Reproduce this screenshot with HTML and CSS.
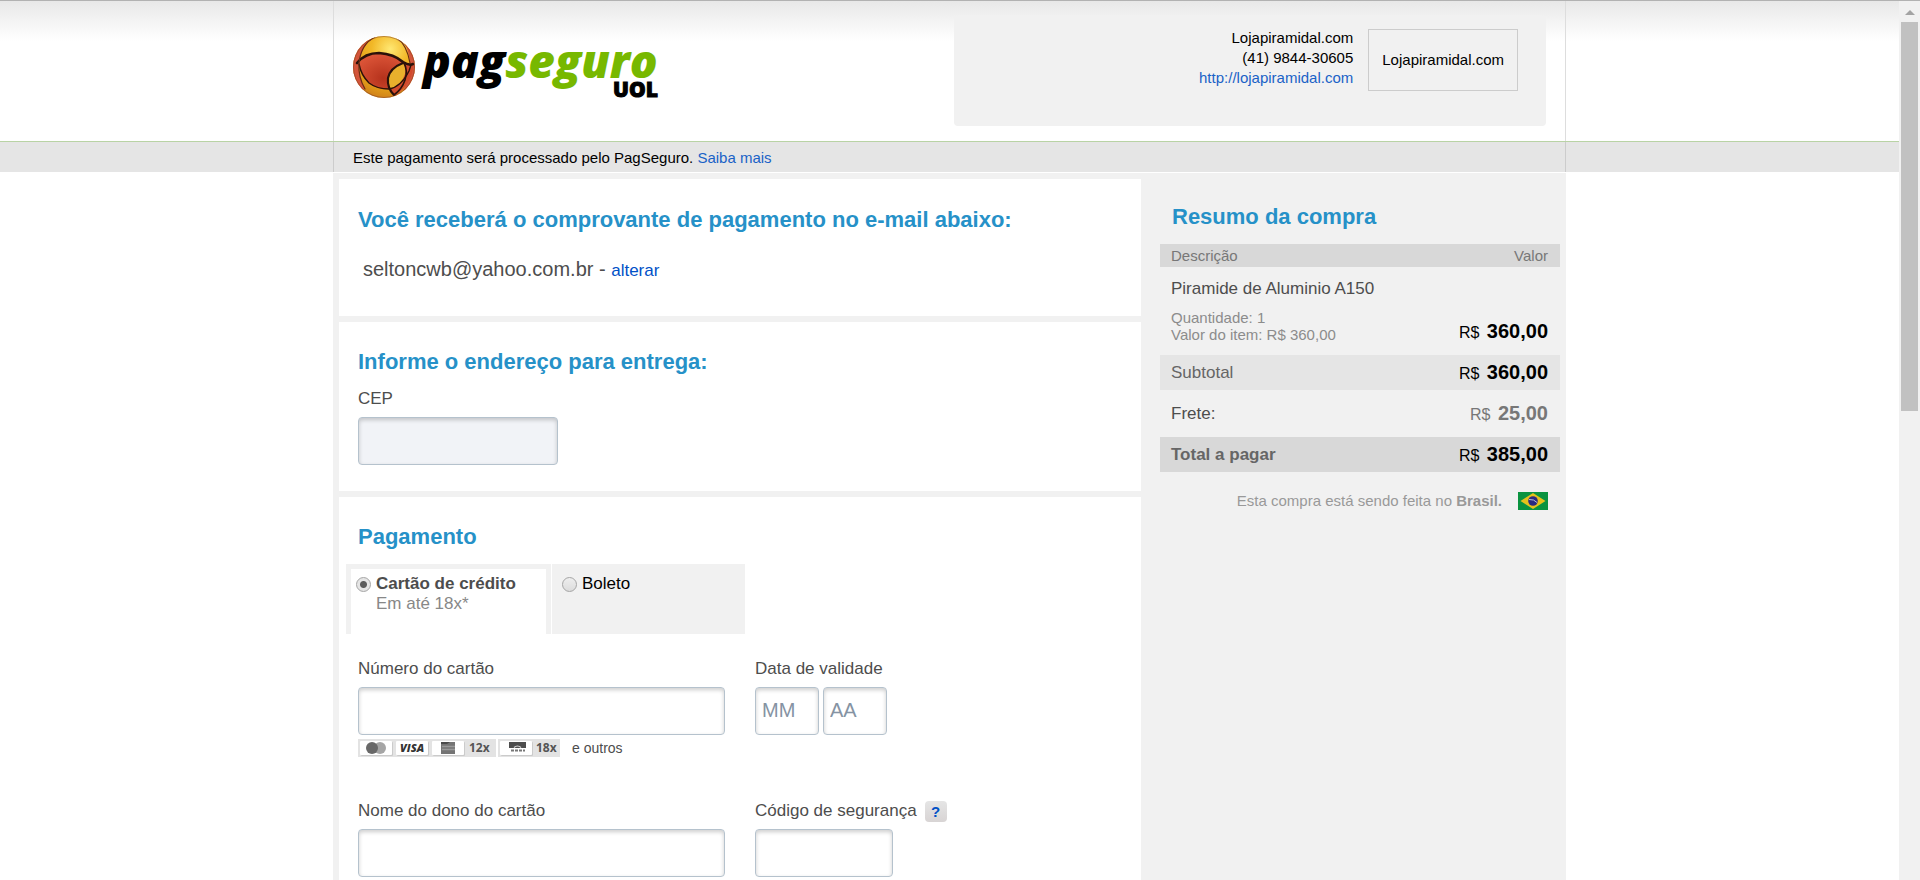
FILE: index.html
```html
<!DOCTYPE html>
<html lang="pt-BR">
<head>
<meta charset="utf-8">
<meta name="viewport" content="width=device-width, initial-scale=1">
<title>PagSeguro - Pagamento</title>
<link rel="stylesheet" href="styles.css">
</head>
<body>
<div class="window">
  <div class="page">
    <header class="header">
      <div class="container header-inner">
        <svg class="logo" viewBox="0 0 310 64" role="img" aria-label="PagSeguro UOL">
          <defs>
            <radialGradient id="gold" cx="0.6" cy="0.22" r="0.85">
              <stop offset="0" stop-color="#ffe873"/>
              <stop offset="0.35" stop-color="#f2b827"/>
              <stop offset="0.75" stop-color="#e09a18"/>
              <stop offset="1" stop-color="#c8751a"/>
            </radialGradient>
            <radialGradient id="red" cx="0.55" cy="0.7" r="0.8">
              <stop offset="0" stop-color="#b5321c"/>
              <stop offset="1" stop-color="#e25a3c"/>
            </radialGradient>
            <clipPath id="ball"><circle cx="31" cy="32" r="31"/></clipPath>
          </defs>
          <g clip-path="url(#ball)">
            <rect width="62" height="64" fill="url(#gold)"/>
            <path d="M0 0H22Q9 9 6 28 Q5 42 12 53 L0 60Z" fill="#d4553a"/>
            <path d="M44 0Q56 10 57 27 Q58 42 50 56 L62 60V0Z" fill="#d4553a"/>
            <path d="M6 28 Q12 18 26 18 Q41 18 50 28 Q33 36 36 54 Q24 55 16 48 Q8 40 6 28Z" fill="url(#red)"/>
            <path d="M50 28 L60 30 Q60 48 42 61 Q34 54 35 42 Q37 33 50 28Z" fill="#d24a2c"/>
            <path d="M50 28 Q38 32 35 42 Q34 49 37 54 Q49 50 52 39 Q53 33 50 28Z" fill="#e9b02c"/>
            <g fill="none" stroke="#2b120a" stroke-linecap="round">
              <path d="M4 28 Q12 18 26 18 Q41 19 50 27 Q56 31 60 29" stroke-width="2.600"/>
              <path d="M6 29 Q8 40 16 48 Q24 54 36 54 Q48 52 56 36 L58 30" stroke-width="1.400"/>
              <path d="M50 28 Q37 33 35 43 Q34 53 41 60" stroke-width="2.200"/>
              <path d="M51 28 Q55 35 52 45 Q49 54 41 60" stroke-width="1.600"/>
              <path d="M22 2 Q8 9 6 28 Q5 42 12 54" stroke="#6a2c14" stroke-width="1.200"/>
              <path d="M44 3 Q54 10 57 28" stroke="#6a2c14" stroke-width="1.200"/>
            </g>
          </g>
          <circle cx="31" cy="32" r="30.500" fill="none" stroke="#7c3b24" stroke-width="0.800" opacity="0.6"/>
          <text class="logo-word" x="70" y="43"><tspan>pag</tspan><tspan class="logo-green">seguro</tspan></text>
          <text class="logo-uol" x="260" y="62">UOL</text>
        </svg>
        <div class="store">
          <div class="store-info">
            <span>Lojapiramidal.com</span>
            <span>(41) 9844-30605</span>
            <a class="link-soft" href="#loja">http://lojapiramidal.com</a>
          </div>
          <div class="store-logo">Lojapiramidal.com</div>
        </div>
      </div>
    </header>
    <div class="notice">
      <p class="container notice-inner">Este pagamento será processado pelo PagSeguro. <a class="link-soft" href="#saiba-mais">Saiba mais</a></p>
    </div>

    <div class="container content">
      <main class="checkout">
        <section class="panel panel-email">
          <h2 class="title">Você receberá o comprovante de pagamento no e-mail abaixo:</h2>
          <p class="email">seltoncwb@yahoo.com.br - <a class="link" href="#alterar">alterar</a></p>
        </section>

        <section class="panel panel-address">
          <h2 class="title">Informe o endereço para entrega:</h2>
          <div class="field">
            <label class="label" for="cep">CEP</label>
            <input class="input input-cep" id="cep" type="text">
          </div>
        </section>

        <section class="panel panel-payment">
          <h2 class="title">Pagamento</h2>
          <div class="tabs">
            <div class="tab tab-active">
              <input class="radio" type="radio" name="meio" id="credito" checked>
              <label class="tab-label" for="credito"><strong>Cartão de crédito</strong><span class="tab-hint">Em até 18x*</span></label>
            </div>
            <div class="tab">
              <input class="radio" type="radio" name="meio" id="boleto">
              <label class="tab-label" for="boleto">Boleto</label>
            </div>
          </div>
          <div class="form-grid">
            <div class="field">
              <label class="label" for="numero">Número do cartão</label>
              <input class="input" id="numero" type="text">
              <div class="cards">
                <svg class="cards-art" viewBox="0 0 202 18" role="img" aria-label="Bandeiras aceitas">
                  <rect width="138" height="18" fill="#e3e3e3"/>
                  <rect x="140" width="62" height="18" fill="#e3e3e3"/>
                  <g fill="#cbcbcb">
                    <rect x="3" y="3" width="32" height="14" rx="1"/><rect x="39" y="3" width="32" height="14" rx="1"/><rect x="75" y="3" width="32" height="14" rx="1"/><rect x="143" y="3" width="32" height="14" rx="1"/>
                  </g>
                  <g fill="#fff">
                    <rect x="2" y="2" width="32" height="14" rx="1"/><rect x="38" y="2" width="32" height="14" rx="1"/><rect x="74" y="2" width="32" height="14" rx="1"/><rect x="142" y="2" width="32" height="14" rx="1"/>
                  </g>
                  <circle cx="22" cy="9" r="6" fill="#a5a5a5"/>
                  <circle cx="14" cy="9" r="6" fill="#686868"/>
                  <text class="cards-visa" x="42" y="13">VISA</text>
                  <rect x="83" y="3" width="14" height="12" fill="#747474"/>
                  <path d="M84 7.500h13M84 10.500h13" stroke="#999" stroke-width="1.500"/>
                  <path d="M83 3h9l-3 2h-6z" fill="#4a4a4a"/>
                  <text class="cards-times" x="111" y="13">12x</text>
                  <rect x="151" y="3" width="17" height="6" fill="#4d4d4d"/>
                  <path d="M156 8.500q3.500-3 7 0" fill="none" stroke="#ddd" stroke-width="1.200"/>
                  <path d="M153 11.500h14" stroke="#777" stroke-width="2" stroke-dasharray="3 1"/>
                  <text class="cards-times" x="178" y="13">18x</text>
                </svg>
                <span>e outros</span>
              </div>
            </div>
            <div class="field">
              <label class="label" for="mes">Data de validade</label>
              <div class="expiry">
                <input class="input input-date" id="mes" type="text" placeholder="MM">
                <input class="input input-date" id="ano" type="text" placeholder="AA" aria-label="Ano de validade">
              </div>
            </div>
            <div class="field">
              <label class="label" for="dono">Nome do dono do cartão</label>
              <input class="input" id="dono" type="text">
            </div>
            <div class="field">
              <div class="label-row">
                <label class="label" for="codigo">Código de segurança</label>
                <button class="help" type="button">?</button>
              </div>
              <input class="input input-code" id="codigo" type="text">
            </div>
          </div>
        </section>
      </main>

      <aside class="summary">
        <h2 class="title title-summary">Resumo da compra</h2>
        <table class="order">
          <thead>
            <tr class="order-head"><th>Descrição</th><th class="amount">Valor</th></tr>
          </thead>
          <tbody>
            <tr class="order-item">
              <td><div class="item-name">Piramide de Aluminio A150</div><div class="item-detail">Quantidade: 1<br>Valor do item: R$ 360,00</div></td>
              <td class="amount">R$ <b class="price">360,00</b></td>
            </tr>
            <tr class="order-subtotal"><td>Subtotal</td><td class="amount">R$ <b class="price">360,00</b></td></tr>
            <tr class="order-shipping"><td>Frete:</td><td class="amount">R$ <b class="price">25,00</b></td></tr>
            <tr class="order-total"><td>Total a pagar</td><td class="amount">R$ <b class="price">385,00</b></td></tr>
          </tbody>
        </table>
        <div class="country">
          <span>Esta compra está sendo feita no <b>Brasil.</b></span>
          <svg class="flag" viewBox="0 0 30 18" role="img" aria-label="Bandeira do Brasil">
            <rect width="30" height="18" fill="#0a9340"/>
            <path d="M15 1 27.500 9 15 17 2.500 9Z" fill="#e6c21c"/>
            <circle cx="15" cy="9" r="4.800" fill="#2b2a80"/>
            <path d="M11 7.500q5-.5 8 3" fill="none" stroke="#b9c0dc" stroke-width="1"/>
          </svg>
        </div>
      </aside>
    </div>
  </div>
  <div class="scrollbar" aria-hidden="true">
    <div class="scroll-arrow"></div>
    <div class="scroll-thumb"></div>
  </div>
</div>
</body>
</html>
```
FILE: styles.css
```css
* { box-sizing: border-box; }

body {
  margin: 0;
  background: #fff;
  color: #4d4d4d;
  font-family: "Liberation Sans", Arial, Helvetica, sans-serif;
  font-size: 17px;
  line-height: 20px;
}

h2, p { margin: 0; }
a { text-decoration: none; }
input, button { font-family: inherit; }

.window {
  display: grid;
  grid-template-columns: minmax(0, 1fr) 21px;
  min-height: 100vh;
  border-top: 1px solid #b2b2b2;
}

.page { display: flex; flex-direction: column; }

.container {
  width: 100%;
  max-width: 1233px;
  margin: 0 auto;
}

.link { color: #0051c7; }
.link-soft { color: #1a62c7; }

/* Header */
.header {
  background: linear-gradient(#e8e8e8, #fff 40px);
  border-bottom: 1px solid #b9d3a5;
}

.header-inner {
  display: flex;
  justify-content: space-between;
  align-items: flex-start;
  padding: 14px 19px 15px;
  border: solid #ddd;
  border-width: 0 1px;
}

.logo {
  width: 310px;
  height: 64px;
  margin-top: 20px;
  overflow: visible;
}

.logo-word {
  font: italic 800 46px "Open Sans", "Noto Sans", sans-serif;
  fill: #000;
}
.logo-green { fill: #77b800; }
.logo-uol {
  font: 800 21px "Open Sans", "Noto Sans", sans-serif;
  fill: #000;
  stroke: #000;
}

.store {
  display: flex;
  justify-content: flex-end;
  align-items: flex-start;
  gap: 15px;
  width: 592px;
  min-height: 111px;
  padding: 13px 28px;
  border-radius: 4px;
  background: #f1f1f1;
  color: #000;
  font-size: 15px;
}

.store-info { display: flex; flex-direction: column; align-items: flex-end; }

.store-logo {
  display: flex;
  align-items: center;
  margin-top: 1px;
  padding: 20px 13px;
  border: 1px solid #ccc;
}

.notice { background: #e5e5e5; border-bottom: 1px solid #fff; }

.notice-inner {
  padding: 6px 19px 4px;
  border: solid #ccc;
  border-width: 0 1px;
  color: #000;
  font-size: 15px;
}

/* Content */
.content {
  display: flex;
  flex: 1;
  background: #f1f1f1;
}

.checkout {
  display: flex;
  flex: 1;
  flex-direction: column;
  gap: 6px;
  min-width: 0;
  padding: 6px 0 0 6px;
}

.panel { padding: 27px 19px 26px; background: #fff; }
.panel-email { padding-top: 28px; padding-bottom: 33px; }
.panel-payment { flex: 1; padding-bottom: 4px; }

.title {
  color: #2691c8;
  font-size: 22px;
  line-height: 26px;
}

.email {
  margin-top: 24px;
  padding-left: 5px;
  font-size: 20px;
  line-height: 24px;
}
.email .link { font-size: 17px; }

.field { display: flex; flex-direction: column; align-items: flex-start; }
.panel-address .field { margin-top: 14px; }
.label-row { display: flex; align-items: center; gap: 8px; height: 20px; }

.input {
  width: 100%;
  height: 48px;
  margin-top: 8px;
  padding: 0 6px 2px;
  border: 1px solid #b5c2cd;
  border-radius: 4px;
  background: #fff;
  box-shadow: inset 0 2px 4px rgba(0, 0, 0, 0.2);
  color: #4d4d4d;
  font-size: 20px;
}
.input::placeholder { color: #8593a3; opacity: 1; }
.input-cep { width: 200px; background: #f1f3f7; }
.input-date { width: 64px; }
.input-code { width: 138px; }
.expiry { display: flex; gap: 4px; }

/* Payment method */
.tabs { display: flex; gap: 1px; margin: 14px 0 0 -12px; }

.tab {
  display: flex;
  align-items: flex-start;
  gap: 5px;
  width: 193px;
  min-height: 70px;
  padding: 10px 10px 0;
  background: #f1f1f1;
  color: #000;
}

.tab-active {
  width: 205px;
  padding: 5px 5px 0;
  border: solid #f1f1f1;
  border-width: 5px 5px 0;
  background: #fff;
  color: #4d4d4d;
}

.tab-label { display: flex; flex-direction: column; }
.tab-hint { color: #888; }

.radio {
  appearance: none;
  width: 15px;
  height: 15px;
  margin: 3px 0 0;
  border: 1px solid #a5a5a5;
  border-radius: 50%;
  background: linear-gradient(#eee, #dcdcdc);
}
.radio:checked { background: radial-gradient(circle, #5c5c5c 0 3px, #e5e5e5 4px); }

.form-grid {
  display: grid;
  grid-template-columns: minmax(0, 367px) minmax(0, 1fr);
  gap: 44px 30px;
  margin-top: 25px;
}

.cards {
  display: flex;
  align-items: center;
  gap: 12px;
  margin-top: 4px;
  font-size: 14px;
  line-height: 18px;
}
.cards-art { width: 202px; height: 18px; }
.cards-visa { font: italic 800 11px "Open Sans", sans-serif; fill: #333; }
.cards-times { font: bold 12px "Open Sans", sans-serif; fill: #555; }

.help {
  width: 22px;
  height: 21px;
  padding: 0;
  border: 0;
  border-radius: 4px;
  background: linear-gradient(#e5e5e5, #d8d4d4);
  color: #0051c7;
  font-size: 15px;
  font-weight: bold;
}

/* Order summary */
.summary { flex: 0 0 425px; padding: 31px 6px 30px 19px; }
.title-summary { margin-left: 12px; }

.order {
  width: 100%;
  margin-top: 14px;
  border-collapse: collapse;
}
.order th, .order td { padding: 0 12px 0 11px; text-align: left; }
.order .amount { text-align: right; color: #000; font-size: 16px; }
.price { margin-left: 3px; font-size: 20px; }

.order-head { height: 23px; background: #d8d8d8; color: #777; }
.order-head th { font-size: 15px; font-weight: normal; }
.order .order-head .amount { color: #777; font-size: 15px; }

.order .order-item td { padding-top: 12px; padding-bottom: 12px; vertical-align: bottom; }
.item-detail {
  margin-top: 10px;
  color: #8c8c8c;
  font-size: 15px;
  line-height: 17px;
}
.order-subtotal { height: 35px; background: #e5e5e5; color: #666; }
.order-shipping { height: 47px; }
.order .order-shipping .amount { color: #777; }
.order-total { height: 35px; background: #d8d8d8; color: #666; font-weight: bold; }
.order-total .amount { font-weight: normal; }

.country {
  display: flex;
  justify-content: flex-end;
  align-items: center;
  gap: 16px;
  margin-top: 19px;
  padding-right: 12px;
  color: #999;
  font-size: 15px;
}
.flag { width: 30px; height: 18px; }

/* Scrollbar */
.scrollbar {
  display: flex;
  flex-direction: column;
  align-items: center;
  padding-top: 9px;
  background: #f1f1f1;
}
.scroll-arrow {
  border: 5px solid transparent;
  border-top: 0;
  border-bottom-color: #a3a3a3;
}
.scroll-thumb {
  width: 17px;
  height: 389px;
  margin-top: 7px;
  background: #c1c1c1;
}
```
